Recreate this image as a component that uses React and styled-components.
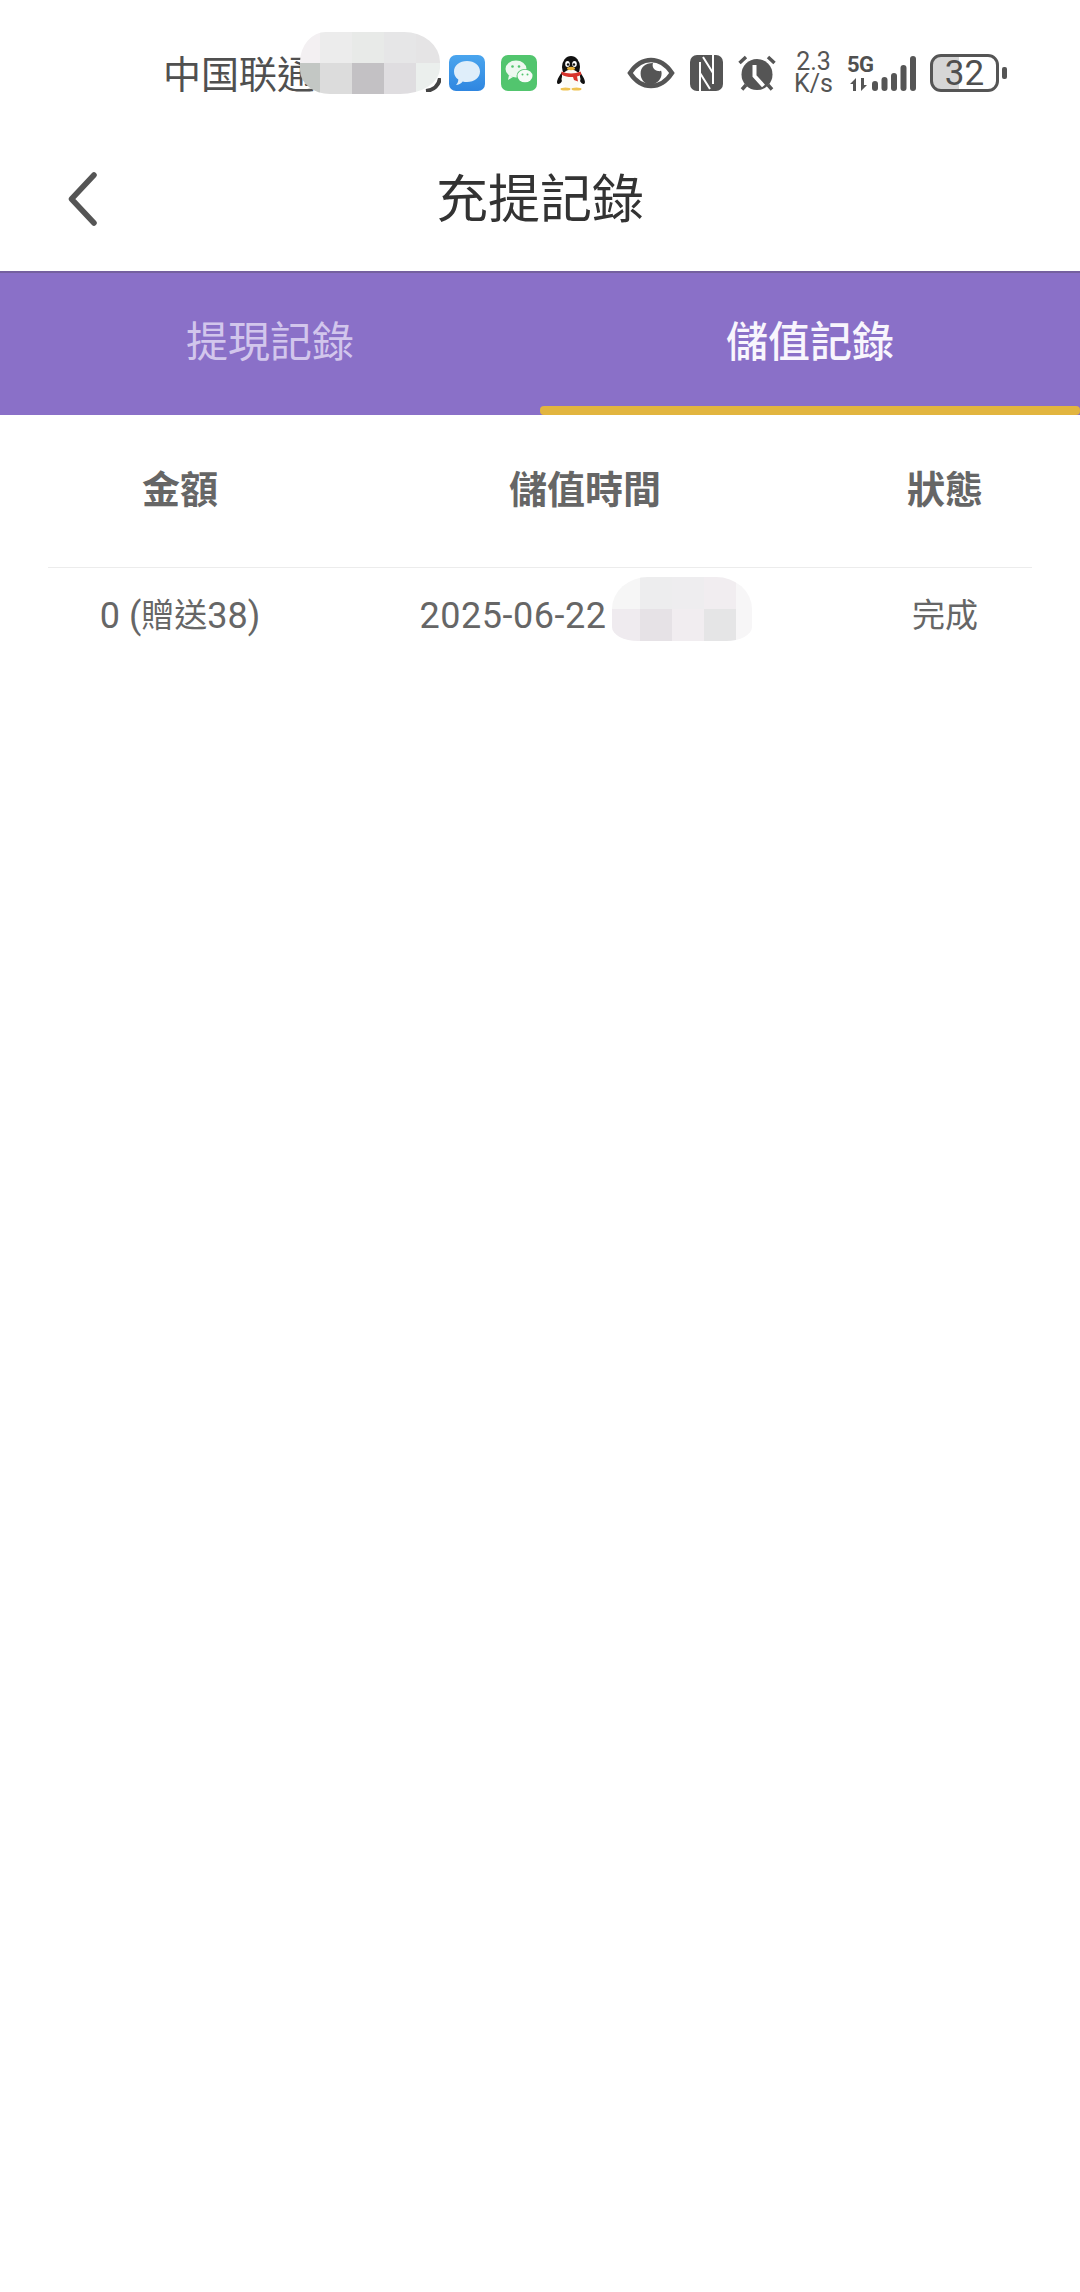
import React from 'react'
import styled, { createGlobalStyle } from 'styled-components'

const Global = createGlobalStyle`
  html, body {
    margin: 0;
    padding: 0;
    background: #fff;
  }
  * {
    box-sizing: border-box;
  }
`

const sans = `Roboto, "Noto Sans CJK TC", "Noto Sans", sans-serif`
const han = `"Noto Sans CJK TC", "Noto Sans", sans-serif`

const carrierTiles = ['#f3f0f2', '#ececec', '#e8eae8', '#e6e6e7', '#e5e4e5', '#c3c7c4', '#dcdcdc', '#c3c1c4', '#dfdde0', '#ebefed']
const timeTiles = ['#f6f6f6', '#ededee', '#eeedef', '#f1edf0', '#f7f6f7', '#efebef', '#e6e2e6', '#f1edf0', '#e5e5e6', '#f7f6f7']

function App() {
  return (
    <Page>
      <Global />
      <StatusBar>
        <Carrier>
          中国联通
          <CarrierTail viewBox="0 0 16 14">
            <path d="M15 0C14 7 9 12 1 13" fill="none" stroke="#444" strokeWidth="4" />
          </CarrierTail>
          <CarrierBlur $columns="20px 32px 32px 32px 24px">
            {carrierTiles.map((c, i) => <Tile key={i} $color={c} />)}
          </CarrierBlur>
        </Carrier>
        <AppIcons>
          <MessageIcon />
          <WechatIcon />
          <QQIcon />
        </AppIcons>
        <SystemIcons>
          <EyeIcon />
          <NfcIcon />
          <AlarmIcon />
          <Speed>
            <span>2.3</span>
            <span>K/s</span>
          </Speed>
          <Network>
            <NetworkStack>
              <NetworkLabel>5G</NetworkLabel>
              <ArrowsIcon />
            </NetworkStack>
            <BarsIcon />
          </Network>
          <BatteryWrap>
            <Battery>32</Battery>
            <BatteryNub />
          </BatteryWrap>
        </SystemIcons>
      </StatusBar>

      <NavBar>
        <BackIcon viewBox="0 0 30 54">
          <path d="M27 3L4.500 27 27 51" fill="none" stroke="#555" strokeWidth="5.500" strokeLinecap="round" strokeLinejoin="round" />
        </BackIcon>
        <Title>充提記錄</Title>
      </NavBar>

      <Tabs>
        <Tab>提現記錄</Tab>
        <Tab $active>儲值記錄</Tab>
      </Tabs>

      <Table>
        <HeadCell>金額</HeadCell>
        <HeadCell>儲值時間</HeadCell>
        <HeadCell>狀態</HeadCell>
        <Divider />
        <Cell>0 (<Han>贈送</Han>38)</Cell>
        <DateCell>
          <DateText>2025-06-22</DateText>
          <TimeBlur $columns="28px 32px 32px 32px 16px">
            {timeTiles.map((c, i) => <Tile key={i} $color={c} />)}
          </TimeBlur>
        </DateCell>
        <Cell><Han>完成</Han></Cell>
      </Table>
    </Page>
  )
}

function MessageIcon() {
  return (
    <AppIcon viewBox="0 0 36 36">
      <defs>
        <linearGradient id="msg" x1="0" y1="0" x2="0" y2="1">
          <stop offset="0" stopColor="#4aa5ee" />
          <stop offset="1" stopColor="#2f86e0" />
        </linearGradient>
      </defs>
      <rect width="36" height="36" rx="7" fill="url(#msg)" />
      <path d="M18 6c7.500 0 13 4.500 13 10.500S25.500 27 18 27c-1.500 0-3-.2-4.300-.6C12 28.500 9.500 30 7 30c1.500-1.500 2.300-3.500 2.300-5.500C6.500 22.500 5 20 5 16.500 5 10.500 10.500 6 18 6z" fill="#dfeefa" />
    </AppIcon>
  )
}

function WechatIcon() {
  return (
    <AppIcon viewBox="0 0 36 36">
      <rect width="36" height="36" rx="7" fill="#52c56e" />
      <ellipse cx="15" cy="14" rx="10.500" ry="8.500" fill="#eef8f0" />
      <path d="M8 20l-1 5 5-3z" fill="#eef8f0" />
      <ellipse cx="24" cy="21" rx="8.500" ry="7" fill="#52c56e" />
      <ellipse cx="24" cy="21" rx="7.500" ry="6.300" fill="#f6fbf7" />
      <circle cx="11.500" cy="11.500" r="1.300" fill="#52c56e" />
      <circle cx="18" cy="11.500" r="1.300" fill="#52c56e" />
      <circle cx="21.500" cy="19.500" r="1" fill="#52c56e" />
      <circle cx="26.500" cy="19.500" r="1" fill="#52c56e" />
    </AppIcon>
  )
}

function QQIcon() {
  return (
    <QQSvg viewBox="0 0 30 36">
      <ellipse cx="15" cy="12" rx="9" ry="11" fill="#111" />
      <path d="M6 17C1 24 0 28 2 29c1 .5 3-1 4-3zM24 17c5 7 6 11 4 12-1 .5-3-1-4-3z" fill="#111" />
      <ellipse cx="15" cy="24" rx="9.500" ry="9.500" fill="#fbfbf6" />
      <ellipse cx="11.500" cy="9" rx="2.300" ry="3" fill="#fff" />
      <ellipse cx="18.500" cy="9" rx="2.300" ry="3" fill="#fff" />
      <circle cx="12" cy="9.500" r="1.200" fill="#111" />
      <circle cx="18" cy="9.500" r="1.200" fill="#111" />
      <ellipse cx="15" cy="13.500" rx="4" ry="1.700" fill="#e9b23a" />
      <path d="M5.500 16.500C11 19 19 19 24.500 16.500l1 3c-1.500 1-3 1.500-4.500 2l1 5-4-1.500-1-3c-3 .2-8 0-11.500-2.500z" fill="#d8342c" />
      <ellipse cx="9.500" cy="34" rx="5" ry="1.500" fill="#eec24f" />
      <ellipse cx="20.500" cy="34" rx="5" ry="1.500" fill="#eec24f" />
    </QQSvg>
  )
}

function EyeIcon() {
  return (
    <EyeSvg viewBox="0 0 48 32">
      <path d="M3 16C9 7 16 3 24 3s15 4 21 13c-6 9-13 13-21 13S9 25 3 16z" fill="none" stroke="#555" strokeWidth="4.500" />
      <path d="M26 6c-1 3 0 7 5 8 2 .4 3 0 3-.5.5 1 .6 2 .6 3 0 6-5 11-11 11s-10-5-10-11S18 6 26 6z" fill="#555" />
    </EyeSvg>
  )
}

function NfcIcon() {
  return (
    <NfcSvg viewBox="0 0 33 36">
      <rect width="33" height="36" rx="7" fill="#555" />
      <path d="M10 36V7M23 0v29M13 2l10 16M10 18l10 16" stroke="#fff" strokeWidth="2" fill="none" />
    </NfcSvg>
  )
}

function AlarmIcon() {
  return (
    <AlarmSvg viewBox="0 0 38 36">
      <circle cx="19" cy="19.500" r="15.500" fill="#555" />
      <path d="M1.500 8L8 2M36.500 8L30 2" stroke="#555" strokeWidth="3.500" fill="none" />
      <path d="M8 30l-4 4.500M30 30l4 4.500" stroke="#555" strokeWidth="3.500" fill="none" />
      <path d="M16.500 10v11l9 10" stroke="#fff" strokeWidth="4" fill="none" />
    </AlarmSvg>
  )
}

function ArrowsIcon() {
  return (
    <ArrowsSvg viewBox="0 0 17 13">
      <path d="M0 6l6-6v13H3V6z" fill="#555" />
      <path d="M17 7l-6 6V0h3v7z" fill="#555" />
    </ArrowsSvg>
  )
}

function BarsIcon() {
  const bars = [
    { x: 0, h: 10 },
    { x: 9.500, h: 14 },
    { x: 19, h: 18 },
    { x: 28.500, h: 26 },
    { x: 38, h: 35 },
  ]
  return (
    <BarsSvg viewBox="0 0 44 35">
      {bars.map((b) => (
        <rect key={b.x} x={b.x} y={35 - b.h} width="6" height={b.h} rx="3" fill="#555" />
      ))}
    </BarsSvg>
  )
}

const Page = styled.div`
  width: 1080px;
  min-height: 2292px;
  background: #fff;
  font-family: ${sans};
`

const StatusBar = styled.div`
  display: flex;
  align-items: center;
  height: 120px;
  padding: 26px 0 0 163px;
  color: #555;
`

const Carrier = styled.div`
  position: relative;
  display: flex;
  align-items: center;
  width: 286px;
  height: 62px;
  padding-bottom: 4px;
  font-family: ${han};
  font-size: 38px;
  color: #505050;
`

const CarrierTail = styled.svg`
  position: absolute;
  left: 262px;
  top: 36px;
  width: 16px;
  height: 14px;
`

const Mosaic = styled.div`
  display: grid;
  grid-template-columns: ${(p) => p.$columns};
  overflow: hidden;
`

const CarrierBlur = styled(Mosaic)`
  position: absolute;
  left: 137px;
  top: -10px;
  height: 62px;
  grid-template-rows: 31px 31px;
  border-radius: 26px 36px 40px 30px / 30px 30px 26px 24px;
`

const TimeBlur = styled(Mosaic)`
  flex: none;
  height: 64px;
  margin: 0 0 14px 6px;
  grid-template-rows: 32px 32px;
  border-radius: 36px 36px 26px 26px / 32px 32px 14px 14px;
`

const Tile = styled.div`
  background: ${(p) => p.$color};
`

const AppIcons = styled.div`
  display: flex;
  align-items: center;
`

const AppIcon = styled.svg`
  width: 36px;
  height: 36px;
  margin-right: 16px;
`

const QQSvg = styled.svg`
  width: 30px;
  height: 36px;
  margin-left: 3px;
`

const SystemIcons = styled.div`
  display: flex;
  align-items: center;
  margin-left: 41px;
`

const EyeSvg = styled.svg`
  width: 48px;
  height: 32px;
`

const NfcSvg = styled.svg`
  width: 33px;
  height: 36px;
  margin-left: 15px;
`

const AlarmSvg = styled.svg`
  width: 38px;
  height: 36px;
  margin-left: 15px;
`

const Speed = styled.div`
  display: flex;
  flex-direction: column;
  align-items: center;
  width: 37px;
  margin-left: 19px;
  font-size: 25px;
  line-height: 22px;
  color: #555;
`

const Network = styled.div`
  display: flex;
  align-items: flex-end;
  margin-left: 15px;
  height: 36px;
`

const NetworkStack = styled.div`
  display: flex;
  flex-direction: column;
  align-items: flex-start;
  width: 25px;
  height: 36px;
`

const NetworkLabel = styled.span`
  font-size: 22px;
  font-weight: 700;
  line-height: 20px;
  height: 23px;
  letter-spacing: -0.5px;
  color: #505050;
`

const ArrowsSvg = styled.svg`
  width: 17px;
  height: 13px;
  margin-left: 3px;
`

const BarsSvg = styled.svg`
  width: 44px;
  height: 35px;
`

const BatteryWrap = styled.div`
  display: flex;
  align-items: center;
  margin-left: 14px;
`

const Battery = styled.div`
  display: flex;
  align-items: center;
  justify-content: center;
  width: 69px;
  height: 38px;
  border: 3px solid #555;
  border-radius: 11px;
  background: linear-gradient(90deg, #d6d6d6 41%, #fff 41%);
  font-size: 35px;
  line-height: 1;
  color: #4f4f4f;
`

const BatteryNub = styled.div`
  width: 5px;
  height: 12px;
  margin-left: 3px;
  border-radius: 2px;
  background: #555;
`

const NavBar = styled.div`
  position: relative;
  display: flex;
  align-items: center;
  justify-content: center;
  height: 151px;
  background: #fff;
`

const BackIcon = styled.svg`
  position: absolute;
  left: 67px;
  top: 52px;
  width: 30px;
  height: 54px;
`

const Title = styled.h1`
  margin: 0;
  font-family: ${han};
  font-size: 52px;
  font-weight: 400;
  line-height: 1;
  color: #333;
`

const Tabs = styled.div`
  display: grid;
  grid-template-columns: 1fr 1fr;
  height: 144px;
  background: #8a70c8;
  border-top: 2px solid #75609f;
`

const Tab = styled.div`
  position: relative;
  display: flex;
  align-items: center;
  justify-content: center;
  padding-bottom: 12px;
  font-family: ${han};
  font-size: 42px;
  font-weight: ${(p) => (p.$active ? 500 : 400)};
  color: ${(p) => (p.$active ? '#f8f5fd' : '#d2c6ec')};

  ${(p) =>
    p.$active &&
    `
    &::after {
      content: '';
      position: absolute;
      left: 0;
      right: 0;
      bottom: 0;
      height: 9px;
      border-radius: 4px;
      background: #e2b53f;
    }
  `}
`

const Table = styled.div`
  display: grid;
  grid-template-columns: 264px 546px 174px;
  grid-template-rows: 152px 1px 96px;
  margin: 0 48px;
`

const HeadCell = styled.div`
  display: flex;
  align-items: center;
  justify-content: center;
  padding-bottom: 9px;
  font-family: ${han};
  font-size: 38px;
  font-weight: 700;
  color: #666;
`

const Divider = styled.div`
  grid-column: 1 / -1;
  background: #ececec;
`

const Cell = styled.div`
  display: flex;
  align-items: center;
  justify-content: center;
  font-size: 36px;
  font-weight: 400;
  white-space: pre;
  color: #666;
`

const DateCell = styled(Cell)`
  padding-left: 2px;
`

const DateText = styled.span`
  letter-spacing: 0.5px;
`

const Han = styled.span`
  position: relative;
  top: -3px;
  font-family: ${han};
  font-size: 33px;
`

export default App
